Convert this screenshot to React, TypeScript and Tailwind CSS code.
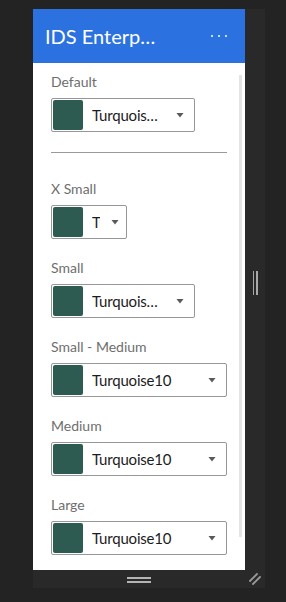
import React from "react";

const FONT = { fontFamily: '"Lato", "Noto Sans", sans-serif' };

function Arrow() {
  return (
    <svg width="8" height="5" viewBox="0 0 8 5" className="shrink-0">
      <path d="M0.5 0 L7.5 0 L4 4.5 Z" fill="#5a5a5a" />
    </svg>
  );
}

function Swatch({ width, text, small }: { width: string; text: string; small?: boolean }) {
  return (
    <div className={`flex items-center h-[34px] ${width} border border-[#979797] rounded-[2px] bg-white`}>
      <div className="ml-[1px] w-[30px] h-[30px] rounded-[2px] bg-[#2d5a51] shrink-0" />
      {small ? (
        <div className="w-[8px] ml-[9px] mr-[11px] overflow-hidden whitespace-nowrap text-[15px] text-[#1c1c1c] leading-[20px]">
          {text}
        </div>
      ) : (
        <div className="flex-1 min-w-0 ml-[9px] mr-[16px] overflow-hidden whitespace-nowrap text-ellipsis text-[15px] tracking-[-0.2px] text-[#1c1c1c] leading-[20px]">
          {text}
        </div>
      )}
      <div className={`${small ? "mr-[7px]" : "mr-[10px]"} flex items-center`}>
        <Arrow />
      </div>
    </div>
  );
}

function Field({ label, width, small }: { label: string; width: string; small?: boolean }) {
  return (
    <div className="flex flex-col">
      <div className="text-[14px] leading-[20px] text-[#6e6e6e]">{label}</div>
      <div className="mt-[6px]">
        <Swatch width={width} text="Turquoise10" small={small} />
      </div>
    </div>
  );
}

export default function App() {
  return (
    <div className="w-[286px] h-[602px] bg-[#232323] overflow-hidden" style={FONT}>
      <div className="ml-[33px] mt-[9px] w-[232px] h-[579px] bg-[#292929] flex flex-col">
        <div className="flex">
          <div className="flex flex-col w-[212px] h-[561px]">
            <div className="h-[54px] bg-[#2b72e0] flex items-center shrink-0">
              <div className="pl-[12px] w-[128px] overflow-hidden whitespace-nowrap text-ellipsis text-white text-[20px] leading-[26px]">
                IDS Enterprise Controls
              </div>
              <div className="flex-1" />
              <div className="w-[44px] mr-[4px] flex items-center justify-center gap-[5px]">
                <span className="w-[2px] h-[2px] bg-white rounded-full" />
                <span className="w-[2px] h-[2px] bg-white rounded-full" />
                <span className="w-[2px] h-[2px] bg-white rounded-full" />
              </div>
            </div>
            <div className="relative flex-1 bg-white px-[18px] pt-[9px]">
              <div className="absolute left-[206px] top-[12px] w-[3px] h-[462px] bg-[#e4e4e4]" />
              <Field label="Default" width="w-[144px]" />
              <div className="mt-[20px] h-px bg-[#9a9a9a]" />
              <div className="mt-[26px] flex flex-col gap-[19px]">
                <Field label="X Small" width="w-[76px]" small />
                <Field label="Small" width="w-[144px]" />
                <Field label="Small - Medium" width="w-[176px]" />
                <Field label="Medium" width="w-[176px]" />
                <Field label="Large" width="w-[176px]" />
              </div>
            </div>
          </div>
          <div className="flex-1 flex items-center justify-center">
            <div className="flex gap-[2px] mt-[-14px]">
              <span className="w-[1.5px] h-[24px] bg-[#a8a8a8]" />
              <span className="w-[1.5px] h-[24px] bg-[#a8a8a8]" />
            </div>
          </div>
        </div>
        <div className="h-[18px] flex items-center relative">
          <div className="w-[212px] flex flex-col items-center gap-[2px] mt-[1px]">
            <span className="w-[24px] h-[2px] bg-[#b4b4b4]" />
            <span className="w-[24px] h-[2px] bg-[#b4b4b4]" />
          </div>
          <div className="flex-1 flex items-center justify-center">
            <svg width="12" height="12" viewBox="0 0 12 12">
              <path d="M1 8 L8 1 M4 11 L11 4" stroke="#9a9a9a" strokeWidth="1.8" strokeLinecap="round" />
            </svg>
          </div>
        </div>
      </div>
    </div>
  );
}
